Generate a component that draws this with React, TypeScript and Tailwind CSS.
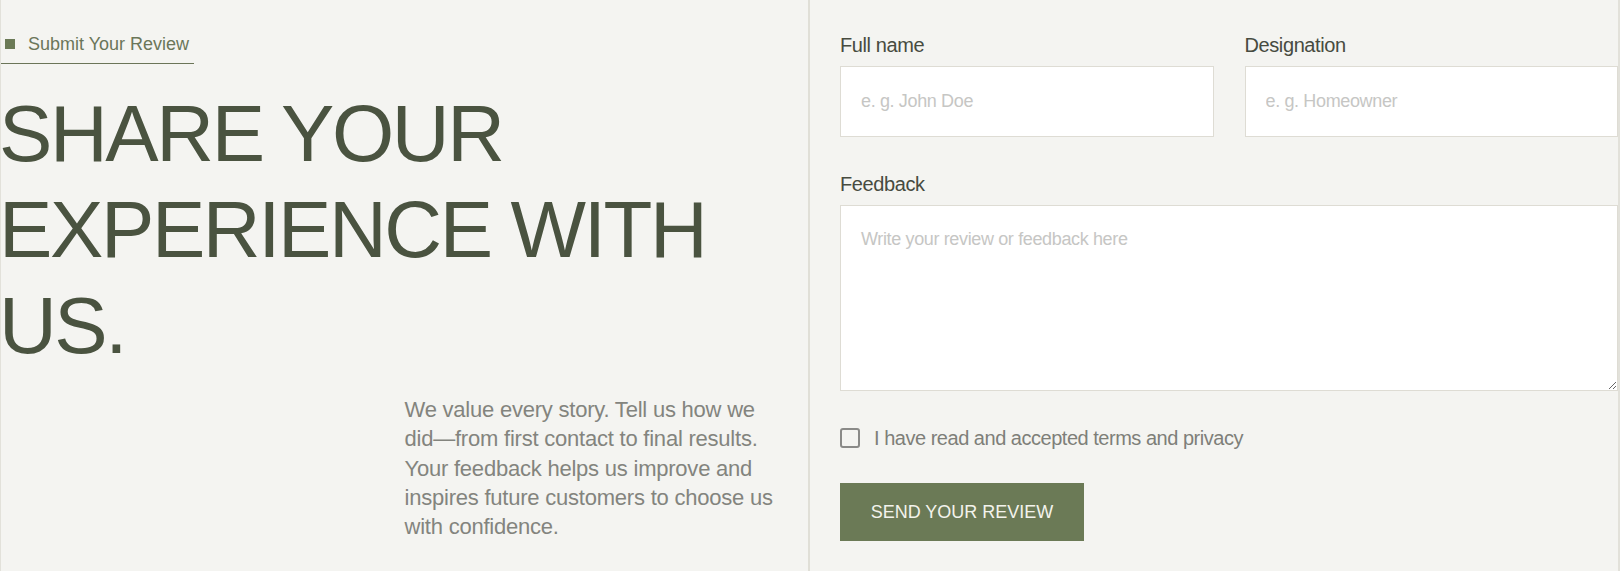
import { useState } from 'react';

const FONT = "font-['Liberation_Sans','Helvetica','Arial',sans-serif]";

function Field({ label, placeholder }: { label: string; placeholder: string }) {
  return (
    <label className="flex flex-col">
      <span className="h-[24px] text-[20px] leading-[24px] tracking-[-0.02em] text-[#474b40]">{label}</span>
      <input
        type="text"
        placeholder={placeholder}
        className="mt-[9px] h-[71px] w-full border border-[#dedcd4] bg-white px-[20px] text-[18px] tracking-[-0.02em] text-[#474b40] outline-none placeholder:text-[#c6c6c4]"
      />
    </label>
  );
}

export default function App() {
  const [accepted, setAccepted] = useState(false);

  return (
    <div className={`${FONT} flex h-[571px] w-[1620px] overflow-hidden border-l border-r-2 border-[#e2e1da] bg-[#f4f4f1]`}>
      {/* left: intro */}
      <section className="flex w-[809px] shrink-0 flex-col border-r-2 border-[#e0dfd7] pt-[32px]">
        <div className="flex self-start border-b border-[#6b7558] pb-[7px] pl-[4px] pr-[5px]">
          <span className="mt-[7px] h-[10px] w-[10px] bg-[#6b7a56]" />
          <span className="ml-[13px] text-[18px] leading-[24px] text-[#6b7659]">Submit Your Review</span>
        </div>

        <h1 className="-ml-[2px] mt-[22px] text-[80px] font-normal uppercase leading-[96px] tracking-[-0.03em] text-[#4a5340]">
          Share your
          <br />
          experience with
          <br />
          us.
        </h1>

        <div className="mt-[21px] grid grid-cols-2">
          <p className="col-start-2 pr-[24px] text-[22px] leading-[29.3px] tracking-[-0.01em] text-[#83847e]">
            We value every story. Tell us how we did—from first contact to final results. Your feedback helps us
            improve and inspires future customers to choose us with confidence.
          </p>
        </div>
      </section>

      {/* right: form */}
      <form className="flex flex-1 flex-col pl-[30px] pt-[33px]" onSubmit={(e) => e.preventDefault()}>
        <div className="grid grid-cols-2 gap-[31px]">
          <Field label="Full name" placeholder="e. g. John Doe" />
          <Field label="Designation" placeholder="e. g. Homeowner" />
        </div>

        <label className="mt-[35px] flex flex-col">
          <span className="h-[24px] text-[20px] leading-[24px] tracking-[-0.02em] text-[#474b40]">Feedback</span>
          <textarea
            placeholder="Write your review or feedback here"
            className="mt-[9px] h-[186px] w-full border border-[#dedcd4] bg-white px-[20px] pt-[20px] text-[18px] leading-[27px] tracking-[-0.02em] text-[#474b40] outline-none placeholder:text-[#c6c6c4]"
          />
        </label>

        <label className="mt-[33px] flex h-[28px] items-center gap-[14px]">
          <input
            type="checkbox"
            checked={accepted}
            onChange={(e) => setAccepted(e.target.checked)}
            className="h-[20px] w-[20px] appearance-none rounded-[3px] border-2 border-[#8a8a88] bg-transparent checked:bg-[#6b7a56]"
          />
          <span className="text-[20px] leading-[28px] tracking-[-0.024em] text-[#7e7f79]">
            I have read and accepted terms and privacy
          </span>
        </label>

        <button
          type="submit"
          className="mt-[31px] flex h-[58px] w-[244px] items-center justify-center bg-[#6b7a56] text-[18px] uppercase text-[#f3f3ec]"
        >
          Send your review
        </button>
      </form>
    </div>
  );
}
